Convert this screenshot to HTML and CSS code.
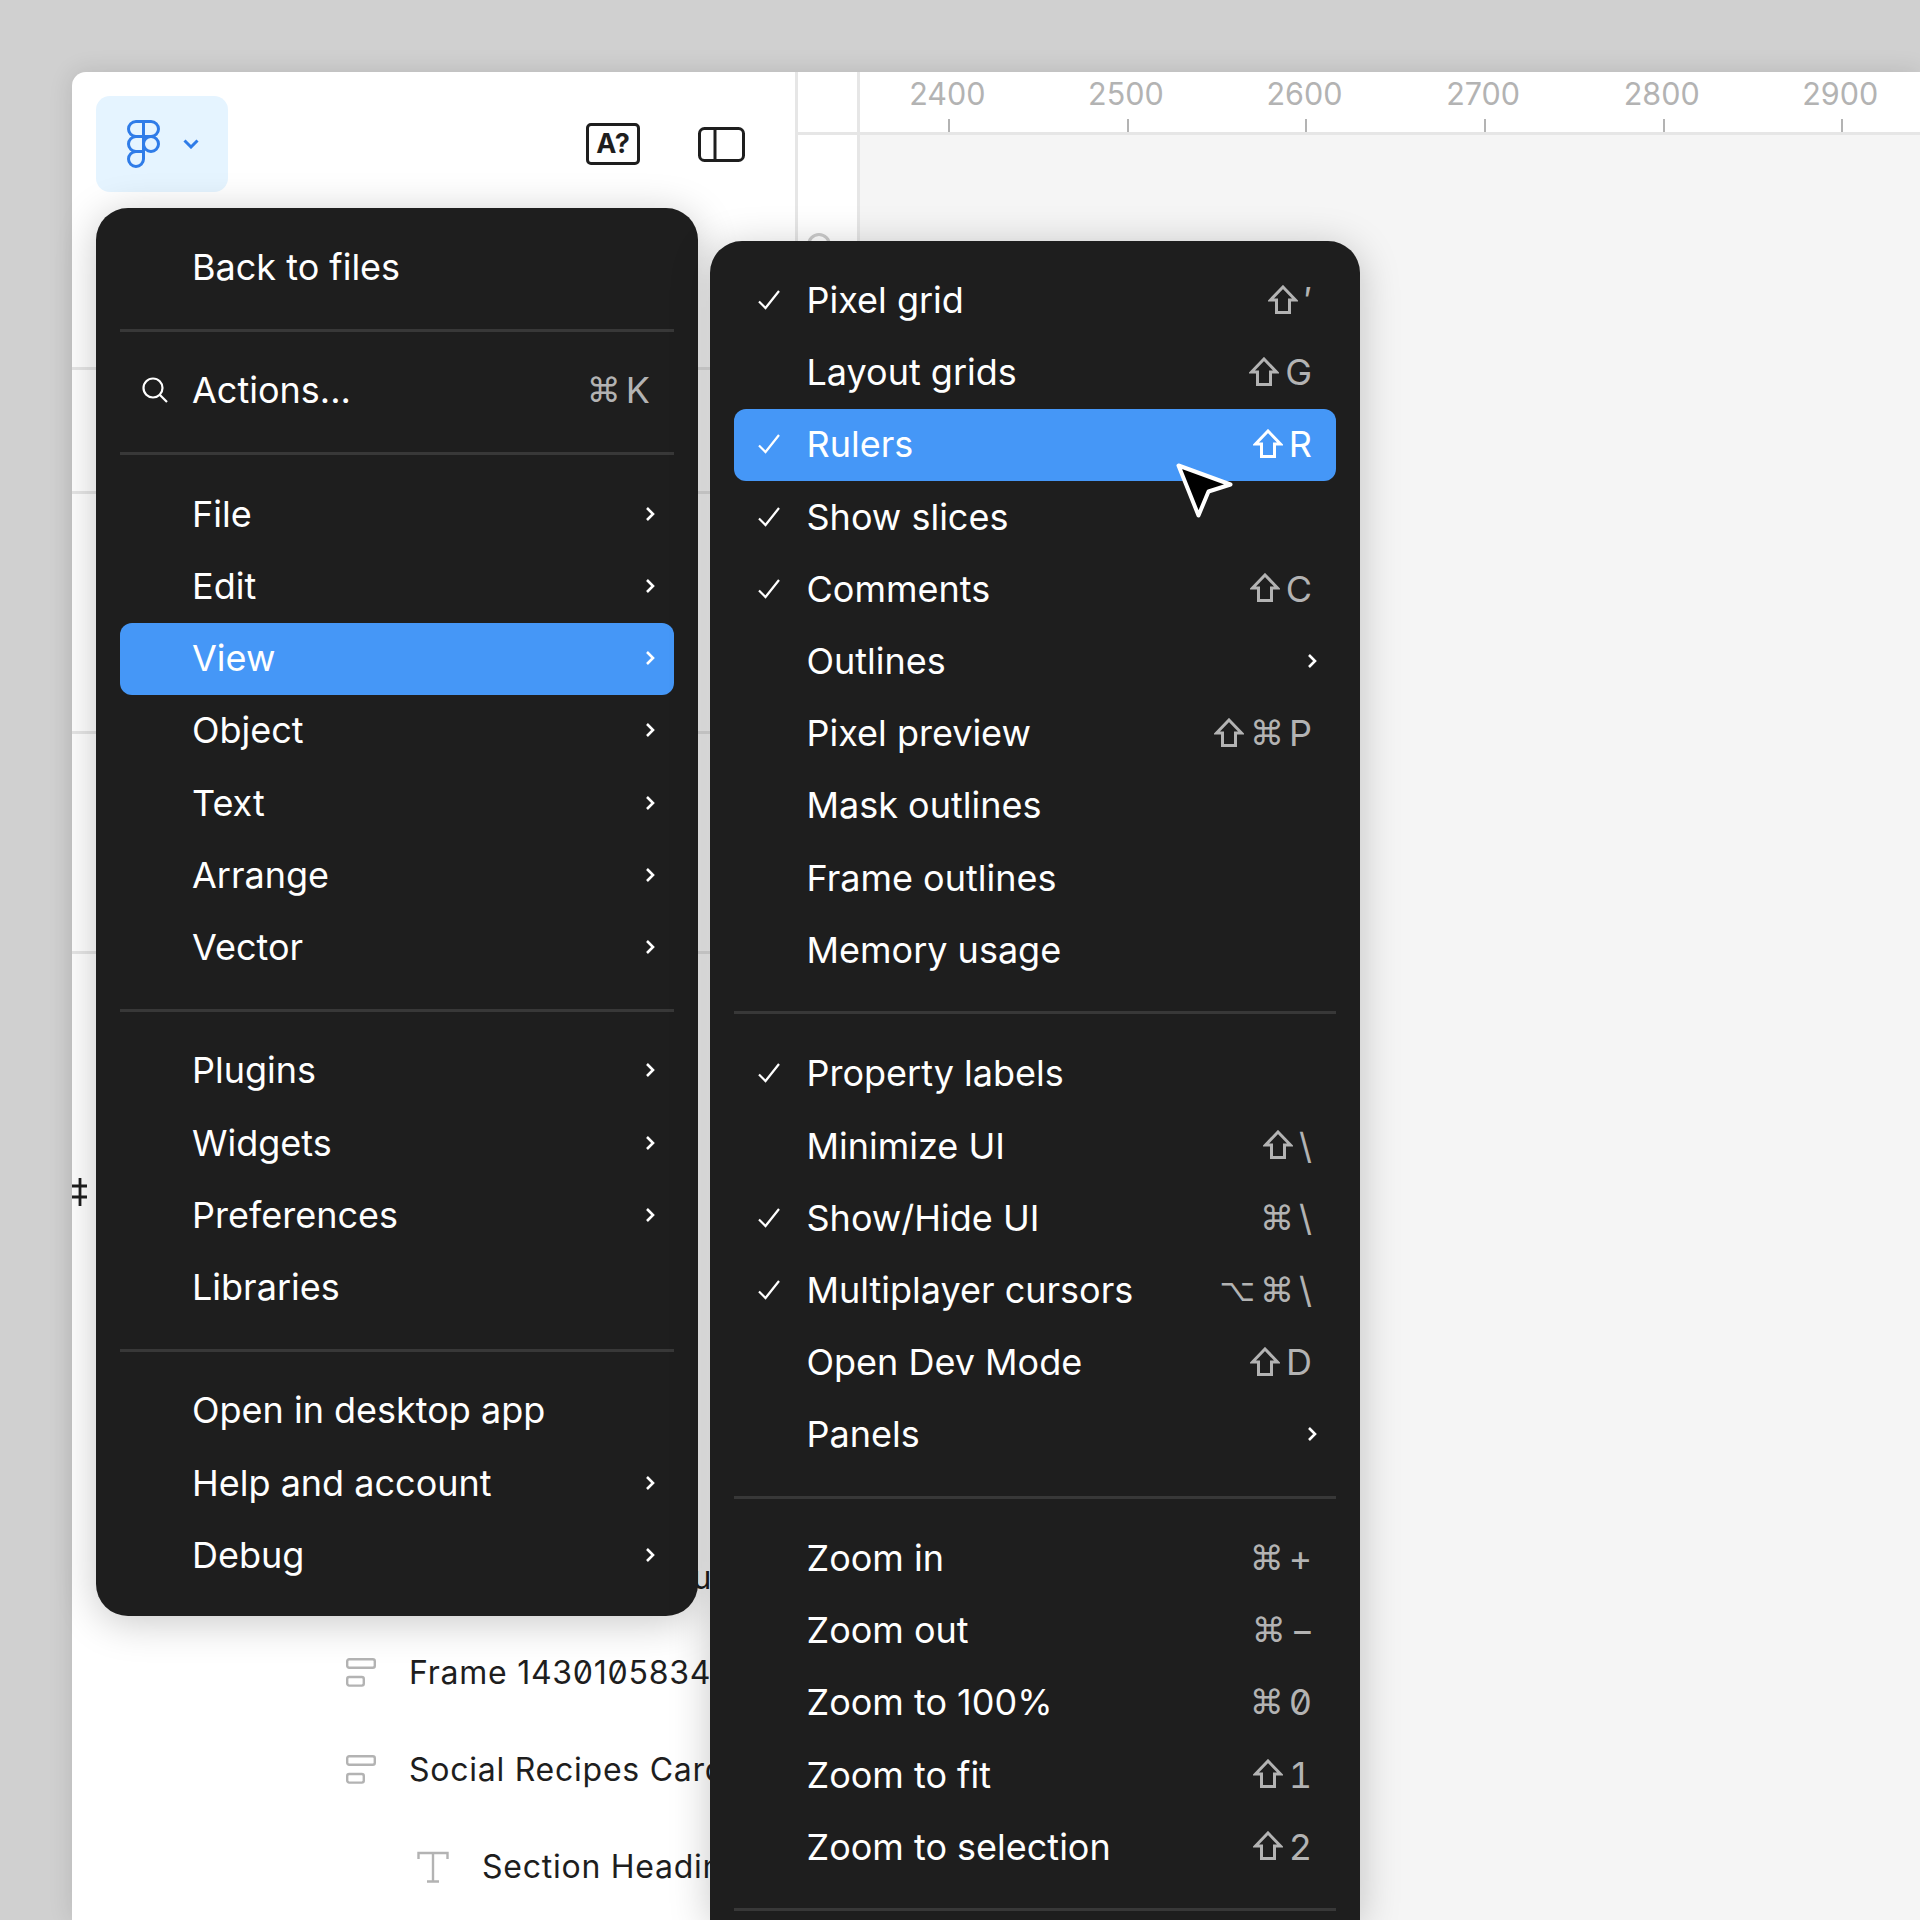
FILE: index.html
```html
<!DOCTYPE html>
<html lang="en">
<head>
<meta charset="utf-8">
<title>Figma view menu</title>
<link rel="stylesheet" href="styles.css">
</head>
<body>
<svg class="defs" width="0" height="0" aria-hidden="true">
  <symbol id="check" viewBox="0 0 24 24"><path d="M2 13.500 8.500 20 22 3" fill="none" stroke="currentColor" stroke-width="2.200"/></symbol>
  <symbol id="chev" viewBox="0 0 10 16"><path d="M2 2l6 6-6 6" fill="none" stroke="currentColor" stroke-width="2.600"/></symbol>
  <symbol id="shift" viewBox="0 0 30 29"><path d="M15 2 27.500 15H21.500V27.500H8.500V15H2.500Z" fill="none" stroke="currentColor" stroke-width="3"/></symbol>
  <symbol id="frame" viewBox="0 0 30 29"><rect x="1.200" y="1.200" width="27.600" height="8.600" rx="2" fill="none" stroke="currentColor" stroke-width="2.400"/><rect x="1.200" y="19" width="16.600" height="8.600" rx="2" fill="none" stroke="currentColor" stroke-width="2.400"/></symbol>
</svg>
<div class="window">
  <aside class="sidebar">
    <header class="toolbar">
      <div class="logo-btn">
        <svg class="logo" viewBox="0 0 33 48"><g fill="none" stroke="currentColor" stroke-width="3"><path d="M16.500 1.500H9a7.500 7.500 0 0 0 0 15h7.500z"/><path d="M16.500 1.500H24a7.500 7.500 0 0 1 0 15h-7.500z"/><path d="M16.500 16.500H9a7.500 7.500 0 0 0 0 15h7.500z"/><circle cx="24" cy="24" r="7.500"/><path d="M9 31.500h7.500V39A7.500 7.500 0 1 1 9 31.500z"/></g></svg>
        <svg class="caret" viewBox="0 0 16 10"><path d="M1.500 1.500 8 8l6.500-6.500" fill="none" stroke="currentColor" stroke-width="3"/></svg>
      </div>
      <div class="tools">
        <div class="ask">A?</div>
        <svg class="panel-icon" viewBox="0 0 47 35"><rect x="1.500" y="1.500" width="44" height="32" rx="5" fill="none" stroke="currentColor" stroke-width="3"/><path d="M17 1.500v32" stroke="currentColor" stroke-width="3"/></svg>
      </div>
    </header>
    <div class="section s1"></div>
    <div class="section s2"></div>
    <div class="section s3"></div>
    <div class="section s4"></div>
    <svg class="bars" viewBox="0 0 15 28"><path d="M8 0v28M0 8h15M0 19h15" fill="none" stroke="#1e1e1e" stroke-width="2.800"/></svg>
    <div class="layers">
      <div class="layer l-hidden"><span>Frame Group Menu</span></div>
      <div class="layer"><svg class="ic"><use href="#frame"/></svg><span>Frame 1430105834</span></div>
      <div class="layer"><svg class="ic"><use href="#frame"/></svg><span>Social Recipes Card</span></div>
      <div class="layer l-text"><svg class="ic-t" viewBox="0 0 32 32"><path d="M1.500 8V2h29v6M16 2v28M10 30.500h12" fill="none" stroke="currentColor" stroke-width="2.400"/></svg><span>Section Heading</span></div>
    </div>
  </aside>
  <main class="canvas">
    <div class="ruler-top">
      <div class="corner"></div>
      <div class="ticks">
        <div class="tick">2400</div><div class="tick">2500</div><div class="tick">2600</div><div class="tick">2700</div><div class="tick">2800</div><div class="tick">2900</div>
      </div>
    </div>
    <div class="canvas-body">
      <div class="ruler-left"><div class="side-label"></div></div>
      <div class="board"></div>
    </div>
  </main>
</div>

<nav class="menu menu-main">
  <div class="item"><span class="lead"></span><span class="label">Back to files</span></div>
  <div class="sep"></div>
  <div class="item"><span class="lead"><svg class="search" viewBox="0 0 26 26"><circle cx="11" cy="11" r="9.500" fill="none" stroke="currentColor" stroke-width="2.200"/><path d="M18 18l7 7" stroke="currentColor" stroke-width="2.200"/></svg></span><span class="label">Actions...</span><span class="keys"><span class="g">⌘</span><span>K</span></span></div>
  <div class="sep"></div>
  <div class="item"><span class="lead"></span><span class="label">File</span><svg class="chev"><use href="#chev"/></svg></div>
  <div class="item"><span class="lead"></span><span class="label">Edit</span><svg class="chev"><use href="#chev"/></svg></div>
  <div class="item active"><span class="lead"></span><span class="label">View</span><svg class="chev"><use href="#chev"/></svg></div>
  <div class="item"><span class="lead"></span><span class="label">Object</span><svg class="chev"><use href="#chev"/></svg></div>
  <div class="item"><span class="lead"></span><span class="label">Text</span><svg class="chev"><use href="#chev"/></svg></div>
  <div class="item"><span class="lead"></span><span class="label">Arrange</span><svg class="chev"><use href="#chev"/></svg></div>
  <div class="item"><span class="lead"></span><span class="label">Vector</span><svg class="chev"><use href="#chev"/></svg></div>
  <div class="sep"></div>
  <div class="item"><span class="lead"></span><span class="label">Plugins</span><svg class="chev"><use href="#chev"/></svg></div>
  <div class="item"><span class="lead"></span><span class="label">Widgets</span><svg class="chev"><use href="#chev"/></svg></div>
  <div class="item"><span class="lead"></span><span class="label">Preferences</span><svg class="chev"><use href="#chev"/></svg></div>
  <div class="item"><span class="lead"></span><span class="label">Libraries</span></div>
  <div class="sep"></div>
  <div class="item"><span class="lead"></span><span class="label">Open in desktop app</span></div>
  <div class="item"><span class="lead"></span><span class="label">Help and account</span><svg class="chev"><use href="#chev"/></svg></div>
  <div class="item"><span class="lead"></span><span class="label">Debug</span><svg class="chev"><use href="#chev"/></svg></div>
</nav>

<nav class="menu menu-sub">
  <div class="item"><span class="lead"><svg class="check"><use href="#check"/></svg></span><span class="label">Pixel grid</span><span class="keys"><svg class="shift"><use href="#shift"/></svg><span>′</span></span></div>
  <div class="item"><span class="lead"></span><span class="label">Layout grids</span><span class="keys"><svg class="shift"><use href="#shift"/></svg><span>G</span></span></div>
  <div class="item active"><span class="lead"><svg class="check"><use href="#check"/></svg></span><span class="label">Rulers</span><span class="keys"><svg class="shift"><use href="#shift"/></svg><span>R</span></span></div>
  <div class="item"><span class="lead"><svg class="check"><use href="#check"/></svg></span><span class="label">Show slices</span></div>
  <div class="item"><span class="lead"><svg class="check"><use href="#check"/></svg></span><span class="label">Comments</span><span class="keys"><svg class="shift"><use href="#shift"/></svg><span>C</span></span></div>
  <div class="item"><span class="lead"></span><span class="label">Outlines</span><svg class="chev"><use href="#chev"/></svg></div>
  <div class="item"><span class="lead"></span><span class="label">Pixel preview</span><span class="keys"><svg class="shift"><use href="#shift"/></svg><span class="g">⌘</span><span>P</span></span></div>
  <div class="item"><span class="lead"></span><span class="label">Mask outlines</span></div>
  <div class="item"><span class="lead"></span><span class="label">Frame outlines</span></div>
  <div class="item"><span class="lead"></span><span class="label">Memory usage</span></div>
  <div class="sep"></div>
  <div class="item"><span class="lead"><svg class="check"><use href="#check"/></svg></span><span class="label">Property labels</span></div>
  <div class="item"><span class="lead"></span><span class="label">Minimize UI</span><span class="keys"><svg class="shift"><use href="#shift"/></svg><span>\</span></span></div>
  <div class="item"><span class="lead"><svg class="check"><use href="#check"/></svg></span><span class="label">Show/Hide UI</span><span class="keys"><span class="g">⌘</span><span>\</span></span></div>
  <div class="item"><span class="lead"><svg class="check"><use href="#check"/></svg></span><span class="label">Multiplayer cursors</span><span class="keys"><span class="g opt">⌥</span><span class="g">⌘</span><span>\</span></span></div>
  <div class="item"><span class="lead"></span><span class="label">Open Dev Mode</span><span class="keys"><svg class="shift"><use href="#shift"/></svg><span>D</span></span></div>
  <div class="item"><span class="lead"></span><span class="label">Panels</span><svg class="chev"><use href="#chev"/></svg></div>
  <div class="sep"></div>
  <div class="item"><span class="lead"></span><span class="label">Zoom in</span><span class="keys"><span class="g">⌘</span><span>+</span></span></div>
  <div class="item"><span class="lead"></span><span class="label">Zoom out</span><span class="keys"><span class="g">⌘</span><span class="minus">−</span></span></div>
  <div class="item"><span class="lead"></span><span class="label">Zoom to 100%</span><span class="keys"><span class="g">⌘</span><span>0</span></span></div>
  <div class="item"><span class="lead"></span><span class="label">Zoom to fit</span><span class="keys"><svg class="shift"><use href="#shift"/></svg><span>1</span></span></div>
  <div class="item"><span class="lead"></span><span class="label">Zoom to selection</span><span class="keys"><svg class="shift"><use href="#shift"/></svg><span>2</span></span></div>
  <div class="sep"></div>
</nav>

<svg class="pointer" viewBox="0 0 60 60"><path d="M4.500 4.500 56.500 23.500 34.500 30.500 24.500 54.500Z" fill="#000" stroke="#fff" stroke-width="4" stroke-linejoin="round"/></svg>
</body>
</html>
```
FILE: styles.css
```css
* { box-sizing: border-box; }
html, body { margin: 0; height: 1920px; overflow: hidden; }
body {
  background: #d0d0d0;
  padding: 72px 0 0 72px;
  font-family: Inter, "Liberation Sans", sans-serif;
  color: #1e1e1e;
  position: relative;
}
.defs { position: absolute; }

.window {
  display: flex;
  height: 1848px;
  background: #fff;
  border-radius: 14px 0 0 0;
  box-shadow: 0 0 24px rgba(0, 0, 0, .12);
  overflow: hidden;
}

.sidebar {
  width: 726px;
  flex: none;
  border-right: 3px solid #e6e6e6;
  position: relative;
  display: flex;
  flex-direction: column;
  overflow: hidden;
}
.toolbar {
  display: flex;
  align-items: center;
  justify-content: space-between;
  padding: 24px 50px 0 24px;
  height: 120px;
  flex: none;
}
.logo-btn {
  width: 132px;
  height: 96px;
  background: #e5f4ff;
  border-radius: 14px;
  display: flex;
  align-items: center;
  padding-left: 31px;
  color: #2f7ce8;
}
.logo { width: 33px; height: 48px; }
.caret { width: 16px; height: 10px; margin-left: 23px; }
.tools { display: flex; align-items: center; gap: 58px; }
.ask {
  width: 54px;
  height: 42px;
  border: 3px solid #1e1e1e;
  border-radius: 5px;
  font-size: 27px;
  font-weight: 700;
  line-height: 36px;
  text-align: center;
}
.panel-icon { width: 47px; height: 35px; }

.section { flex: none; border-bottom: 3px solid #e6e6e6; }
.s1 { height: 178px; }
.s2 { height: 124px; }
.s3 { height: 240px; }
.s4 { height: 220px; }

.bars { position: absolute; left: 0; top: 1106px; width: 15px; height: 28px; }

.layers {
  margin-top: 573px;
  font-size: 32px;
  letter-spacing: .75px;
  font-feature-settings: "zero";
}
.layer {
  height: 97px;
  display: flex;
  align-items: center;
  padding-left: 274px;
  gap: 33px;
  white-space: nowrap;
}
.layer .ic { width: 30px; height: 29px; color: #b3b3b3; flex: none; }
.l-hidden { padding: 4px 0 0 337px; }
.l-text { padding-left: 345px; gap: 33px; }
.ic-t { width: 32px; height: 32px; color: #b3b3b3; flex: none; }

.canvas { flex: 1; display: flex; flex-direction: column; min-width: 0; }
.ruler-top { display: flex; height: 63px; border-bottom: 3px solid #e6e6e6; flex: none; }
.corner { width: 62px; flex: none; border-right: 3px solid #e6e6e6; }
.ticks { display: flex; margin-left: -2px; }
.tick {
  width: 178.6px;
  flex: none;
  text-align: center;
  color: #b3b3b3;
  font-size: 30.500px;
  line-height: 44px;
  position: relative;
}
.tick::after {
  content: "";
  position: absolute;
  left: 50%;
  margin-left: 1px;
  bottom: 0;
  width: 2px;
  height: 13px;
  background: #b3b3b3;
}
.canvas-body { flex: 1; display: flex; }
.ruler-left { width: 62px; flex: none; border-right: 3px solid #e6e6e6; padding: 98px 0 0 9px; }
.side-label { width: 24px; height: 32px; border: 3px solid #ccc; border-radius: 12px; }
.board { flex: 1; background: #f5f5f5; }

.menu {
  position: absolute;
  background: #1e1e1e;
  color: #fff;
  padding: 24px;
  box-shadow: 0 6px 40px rgba(0, 0, 0, .22);
  font-size: 36px;
  overflow: hidden;
}
.menu-main { left: 96px; top: 208px; width: 602px; height: 1408px; border-radius: 32px; }
.menu-sub { left: 710px; top: 240.500px; width: 650px; height: 1679.500px; border-radius: 32px 32px 0 0; }

.item {
  height: 72.200px;
  display: flex;
  align-items: center;
  padding-right: 24px;
  border-radius: 12px;
  white-space: nowrap;
}
.menu-main .item { height: 72.250px; padding-bottom: 2px; }
.menu-sub .item { padding-bottom: 1px; }
.item.active { background: #4597f7; }
.lead { width: 72.500px; flex: none; display: flex; justify-content: center; padding-right: 2px; }
.menu-main .lead { width: 72px; }
.label { flex: 1; }
.sep { height: 3px; margin: 24.500px 0 23.500px; background: #383838; }
.menu-sub .sep { margin-bottom: 24px; }

.keys {
  display: flex;
  align-items: center;
  gap: 6px;
  color: #b3b3b3;
  font-size: 36px;
  font-feature-settings: "zero", "tnum";
}
.g { font-family: "DejaVu Sans", sans-serif; font-size: 34px; margin-right: -1px; }
.g.opt { font-size: 31px; }
.minus { margin-right: -2px; }
.active .keys { color: #fff; }

.check { width: 24px; height: 24px; }
.chev { width: 10px; height: 16px; margin-right: -5px; }
.search { width: 26px; height: 26px; }
.shift { width: 30px; height: 29px; margin-top: -2px; }

.pointer { position: absolute; left: 1174px; top: 461px; width: 60px; height: 60px; }
```
